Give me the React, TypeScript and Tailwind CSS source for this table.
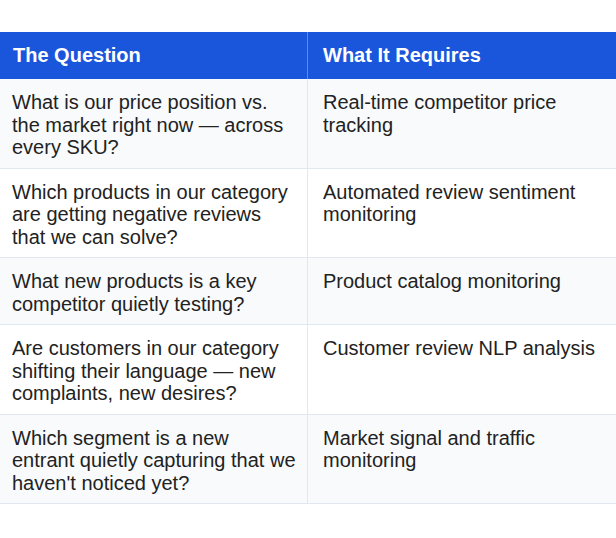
import React from "react";

const rows: [string, string][] = [
  ["What is our price position vs. the market right now — across every SKU?", "Real-time competitor price tracking"],
  ["Which products in our category are getting negative reviews that we can solve?", "Automated review sentiment monitoring"],
  ["What new products is a key competitor quietly testing?", "Product catalog monitoring"],
  ["Are customers in our category shifting their language — new complaints, new desires?", "Customer review NLP analysis"],
  ["Which segment is a new entrant quietly capturing that we haven't noticed yet?", "Market signal and traffic monitoring"],
];

export default function App() {
  return (
    <div
      className="w-[616px] h-[538px] bg-white pt-[32px] overflow-hidden"
      style={{ fontFamily: '"Liberation Sans", Arial, sans-serif' }}
    >
      <div className="grid grid-cols-[308px_308px] h-[47px] bg-[#1a56db] text-white font-bold text-[20px] leading-[23px]">
        <div className="flex items-center pl-[13px] border-r border-[#5f8ae6]">The Question</div>
        <div className="flex items-center pl-[15px]">What It Requires</div>
      </div>
      {rows.map(([q, r], i) => (
        <div
          key={i}
          className={`grid grid-cols-[308px_308px] border-b border-[#e1e8f2] text-[20px] leading-[22.5px] text-[#222222] ${
            i % 2 === 0 ? "bg-[#f8fafc]" : "bg-white"
          }`}
        >
          <div className="pl-[12px] pr-[11px] pt-[12px] pb-[9px] border-r border-[#e1e8f2]">{q}</div>
          <div className="pl-[15px] pr-[8px] pt-[12px] pb-[9px]">{r}</div>
        </div>
      ))}
    </div>
  );
}
